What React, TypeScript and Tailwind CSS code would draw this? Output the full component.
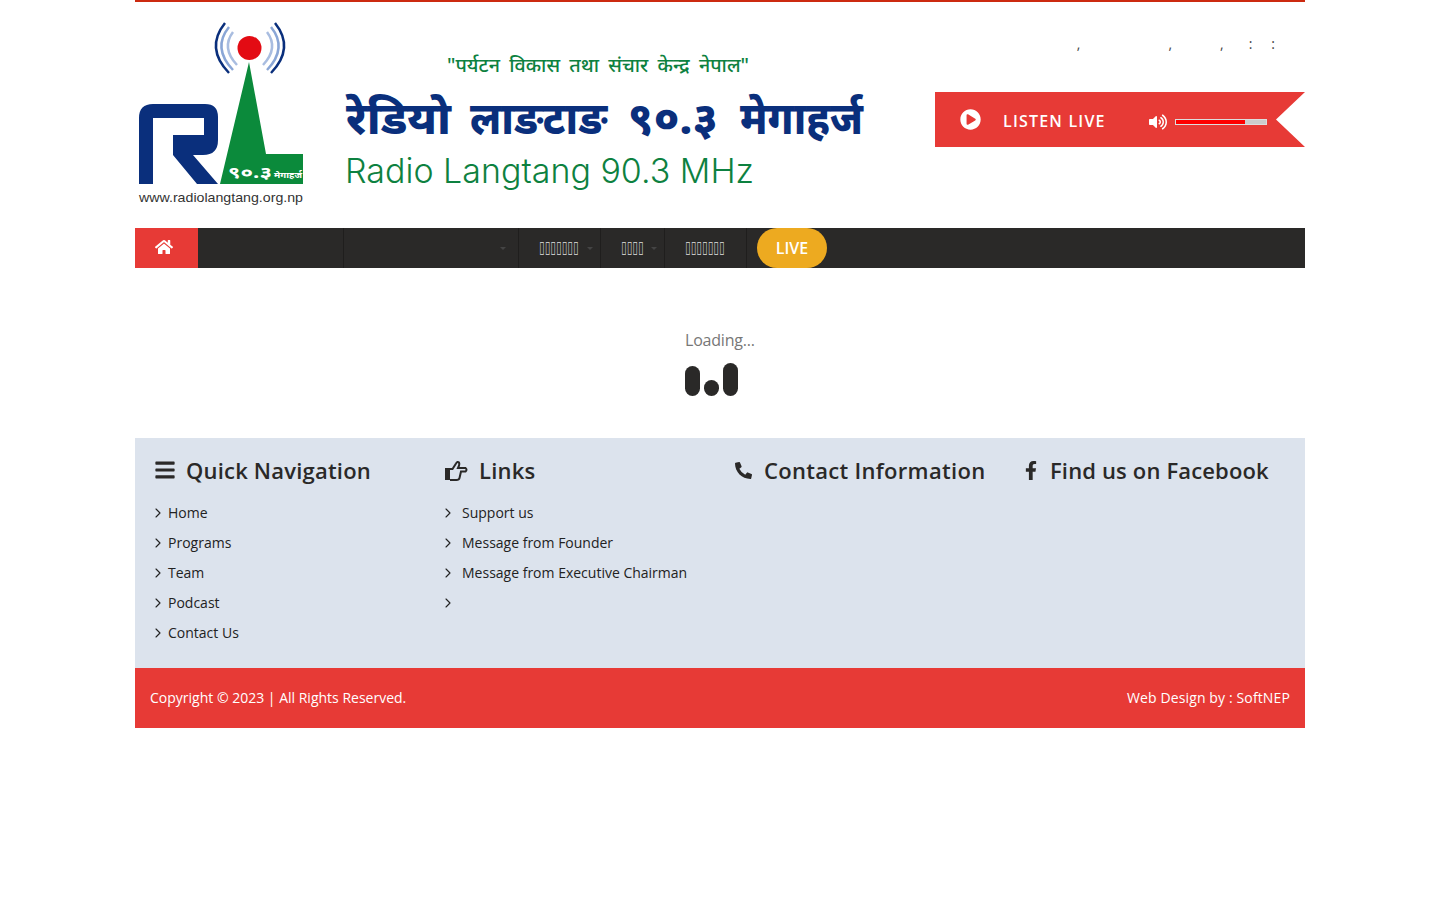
import { ChevronRight } from 'lucide-react'
import { FaBars, FaFacebookF, FaHome, FaPhoneAlt, FaPlayCircle, FaVolumeUp } from 'react-icons/fa'

const quickLinks = ['Home', 'Programs', 'Team', 'Podcast', 'Contact Us']
const otherLinks = ['Support us', 'Message from Founder', 'Message from Executive Chairman', '']

const deva = "'Noto Sans', sans-serif"

function Logo() {
  return (
    <svg width="740" height="190" viewBox="135 20 740 190" className="block">
      <path d="M225 23 Q205 48 229 73" fill="none" stroke="#0a2f7c" strokeWidth="2.5" />
      <path d="M229 27 Q212 48 233 70" fill="none" stroke="#8aa6d6" strokeWidth="2.5" />
      <path d="M233 32 Q221 48 237 65" fill="none" stroke="#a9bde0" strokeWidth="2.5" />
      <path d="M275 23 Q295 48 271 73" fill="none" stroke="#0a2f7c" strokeWidth="2.5" />
      <path d="M271 27 Q288 48 267 70" fill="none" stroke="#8aa6d6" strokeWidth="2.5" />
      <path d="M267 32 Q279 48 263 65" fill="none" stroke="#a9bde0" strokeWidth="2.5" />
      <circle cx="249.500" cy="48" r="12" fill="#e30b13" />
      <path d="M139 184 V118 Q139 104 153 104 H205 Q218 104 218 117 V140 Q218 155 203 155 H193 L218 184 H197 L173 155 V135 H204 V118 H153 V184 Z" fill="#0a2f7c" />
      <path d="M249 62 L220 184 H303 V154 H266 Z" fill="#0b8a3b" />
      <text x="228" y="178" fill="#fff" fontSize="16" fontWeight="700" fontFamily={deva} textLength="44" lengthAdjust="spacingAndGlyphs">९०.३</text>
      <text x="274" y="178" fill="#fff" fontSize="8" fontWeight="700" fontFamily={deva} textLength="28" lengthAdjust="spacingAndGlyphs">मेगाहर्ज</text>
      <text x="139" y="202" fill="#333" fontSize="13.500" fontFamily="'Liberation Sans', sans-serif" textLength="164" lengthAdjust="spacingAndGlyphs">www.radiolangtang.org.np</text>
      <text x="447" y="72" fill="#0d8140" fontSize="19" fontWeight="500" fontFamily={deva} wordSpacing="4" textLength="302" lengthAdjust="spacingAndGlyphs">"पर्यटन विकास तथा संचार केन्द्र नेपाल"</text>
      <g fill="#0a2f7c" fontSize="44" fontWeight="800" fontFamily={deva}>
        <text x="346" y="134" textLength="105" lengthAdjust="spacingAndGlyphs">रेडियो</text>
        <text x="470" y="134" textLength="137" lengthAdjust="spacingAndGlyphs">लाङटाङ</text>
        <text x="628" y="134" textLength="90" lengthAdjust="spacingAndGlyphs">९०.३</text>
        <text x="740" y="134" textLength="123" lengthAdjust="spacingAndGlyphs">मेगाहर्ज</text>
      </g>
      <text x="345" y="183" fill="#0d8140" fontSize="34" fontWeight="350" fontFamily="Inter, sans-serif" textLength="409" lengthAdjust="spacingAndGlyphs">Radio Langtang 90.3 MHz</text>
    </svg>
  )
}

function HandIcon() {
  return (
    <svg width="23" height="21" viewBox="0 0 23 21" className="shrink-0">
      <rect x="0" y="8" width="5" height="12" fill="currentColor" />
      <path d="M5 9 H7.500 L11 3.500 Q12.500 1 14 2.500 Q15 4 13 8 H20.500 Q22.500 9.500 20.500 11.500 H16 L14.500 18 Q14 20 11.500 20 H5" fill="none" stroke="currentColor" strokeWidth="2" />
    </svg>
  )
}

function NavItem({ label, caret, className }: { label?: string; caret?: string; className: string }) {
  return (
    <div className={`relative flex h-full items-center border-r border-[#1f1e1d] pl-[20px] font-['DejaVu_Sans',sans-serif] text-[10.300px] leading-none text-[#c4c4c4] ${className}`}>
      {label && <span className="mb-[4px] inline-block scale-y-[1.7]">{label}</span>}
      {caret && <span className={`absolute top-[19px] h-0 w-0 border-x-[3px] border-t-[3px] border-x-transparent border-t-[#444] ${caret}`} />}
    </div>
  )
}

function FooterList({ items, gap }: { items: string[]; gap: string }) {
  return (
    <ul className="mt-[13px] text-sm text-[#222]">
      {items.map((item, i) => (
        <li key={i} className={`flex h-[30px] items-center ${gap}`}>
          <ChevronRight size={16} strokeWidth={1.7} className="-ml-[5px] shrink-0" />
          {item}
        </li>
      ))}
    </ul>
  )
}

export default function App() {
  return (
    <div className="mx-auto h-[900px] w-[1170px] bg-white font-['Open_Sans',sans-serif]">
      <div className="h-[2px] bg-[#cc2a10]" />

      <header className="flex h-[226px] items-start justify-between pt-[18px]">
        <Logo />
        <div className="w-[370px]">
          <div className="flex h-[72px] justify-end pr-[30px] pt-[14px] text-sm leading-[20px] text-[#444]">
            <span>,</span>
            <span className="ml-[88px]">,</span>
            <span className="ml-[48px]">,</span>
            <span className="ml-[25px]">:</span>
            <span className="ml-[19px]">:</span>
          </div>
          <div className="flex h-[55px] items-center bg-[#e73a36] pl-[25px] text-white [clip-path:polygon(0_0,100%_0,calc(100%-29px)_50%,100%_100%,0_100%)]">
            <FaPlayCircle className="size-[21px]" />
            <span className="ml-[22px] pt-[2px] text-base font-semibold tracking-[1.2px]">LISTEN LIVE</span>
            <FaVolumeUp className="ml-[43px] mt-[4px] size-[18px]" />
            <div className="ml-[8px] mt-[4px] h-[6px] w-[92px] border border-[#ddd] bg-[#ccc]">
              <div className="h-full w-[77%] bg-[#f00]" />
            </div>
          </div>
        </div>
      </header>

      <nav className="flex h-[40px] items-center bg-[#2a2928]">
        <div className="flex h-full w-[63px] items-center bg-[#e73a36] pb-[2px] pl-[20px] text-white">
          <FaHome className="size-[18px]" />
        </div>
        <NavItem className="w-[146px]" />
        <NavItem className="w-[175px]" caret="right-[12px]" />
        <NavItem className="w-[82px]" label="▯▯▯▯▯▯▯" caret="right-[7px]" />
        <NavItem className="w-[64px]" label="▯▯▯▯" caret="right-[7px]" />
        <NavItem className="w-[82px]" label="▯▯▯▯▯▯▯" />
        <div className="ml-[10px] flex h-full w-[70px] items-center justify-center rounded-[20px] bg-[#edaa20] text-base font-semibold text-white">
          LIVE
        </div>
      </nav>

      <main className="flex h-[170px] flex-col items-center pt-[60px]">
        <div className="w-[70px]">
          <div className="text-base leading-[24px] tracking-[-0.2px] text-[#777]">Loading...</div>
          <div className="mt-[11px] flex h-[33px] items-end gap-[4px]">
            <span className="h-[30px] w-[15px] rounded-full bg-[#2a2928]" />
            <span className="h-[16px] w-[15px] rounded-full bg-[#2a2928]" />
            <span className="h-[33px] w-[15px] rounded-full bg-[#2a2928]" />
          </div>
        </div>
      </main>

      <section className="grid h-[230px] grid-cols-[290px_290px_290px_1fr] bg-[#dce3ed] pl-[20px] pt-[17px] text-[#2a2928]">
        <div>
          <h3 className="flex h-[30px] items-center gap-[11px] text-[22px] font-semibold tracking-[0.2px]">
            <FaBars className="-mx-[1px] size-[22px]" />
            Quick Navigation
          </h3>
          <FooterList items={quickLinks} gap="gap-[2px]" />
        </div>
        <div>
          <h3 className="flex h-[30px] items-center gap-[11px] text-[22px] font-semibold tracking-[0.2px]">
            <HandIcon />
            Links
          </h3>
          <FooterList items={otherLinks} gap="gap-[6px]" />
        </div>
        <div>
          <h3 className="flex h-[30px] items-center gap-[12px] text-[22px] font-semibold tracking-[0.3px]">
            <FaPhoneAlt className="size-[17px]" />
            Contact Information
          </h3>
        </div>
        <div>
          <h3 className="flex h-[30px] items-center gap-[13px] text-[22px] font-semibold tracking-[0.15px]">
            <FaFacebookF className="h-[21px] w-[12px]" />
            Find us on Facebook
          </h3>
        </div>
      </section>

      <footer className="flex h-[60px] items-center justify-between bg-[#e73a36] px-[15px] text-sm text-white">
        <span>Copyright © 2023 | All Rights Reserved.</span>
        <span className="tracking-[0.13px]">Web Design by : SoftNEP</span>
      </footer>
    </div>
  )
}
